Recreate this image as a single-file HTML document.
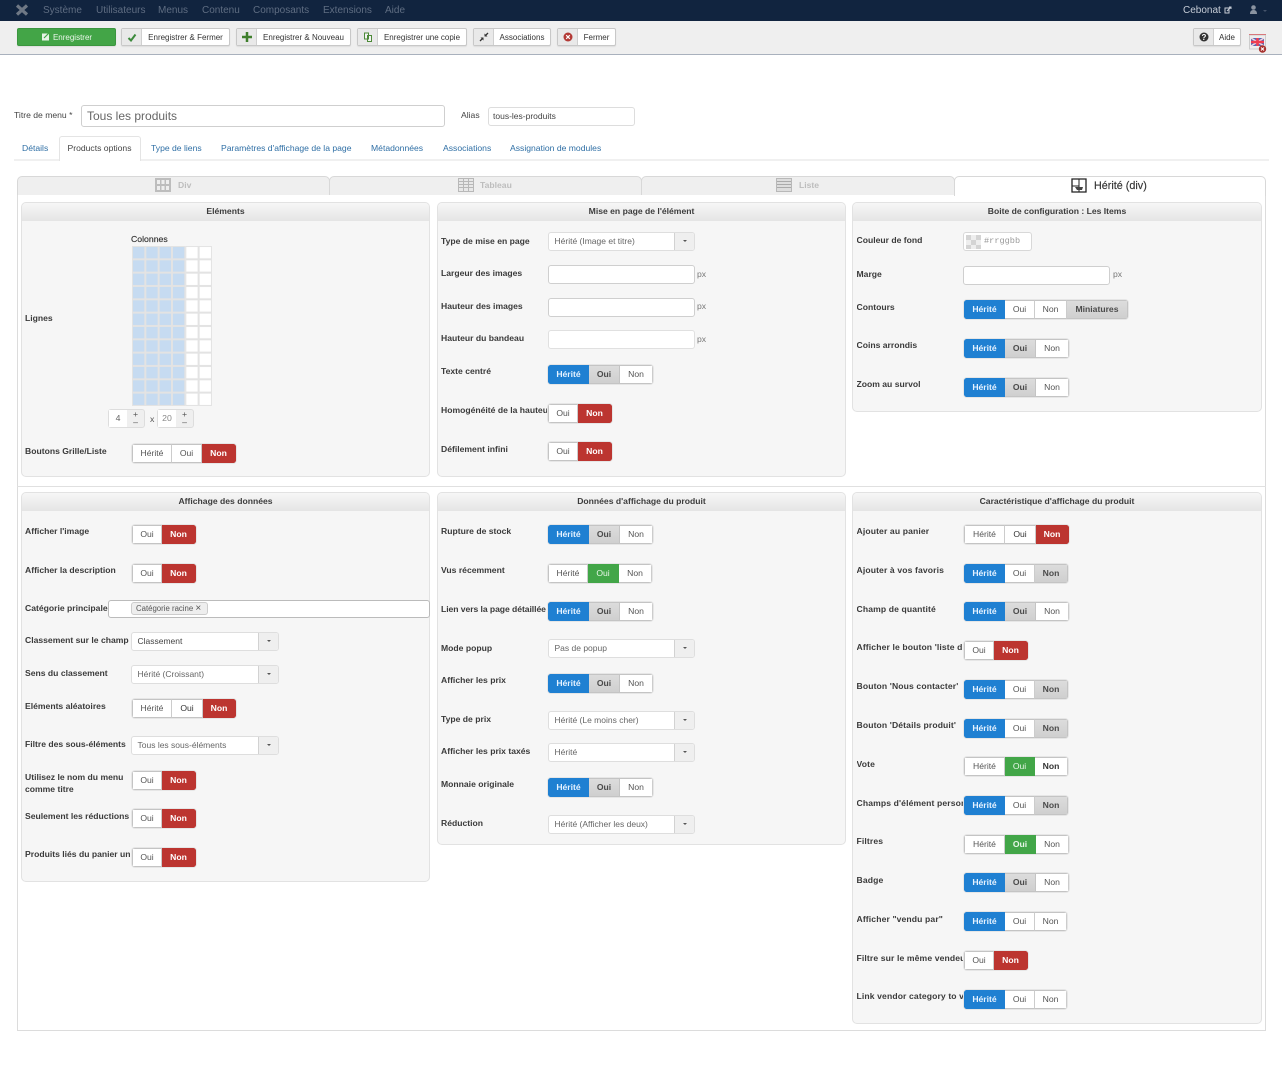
<!DOCTYPE html>
<html lang="fr"><head><meta charset="utf-8"><title>Tous les produits</title>
<style>
*{box-sizing:border-box}
html,body{margin:0;padding:0;background:#fff}
body{width:1282px;height:1080px;position:relative;overflow:hidden;font:8.7px/1 "Liberation Sans",sans-serif;color:#333;filter:blur(.3px)}
.a,.l,.g,.s,.i,.p,.n,.tb,.t,.tab,.px{position:absolute}
.n{top:5px;color:#5f6d82;font-size:10px;line-height:12px;white-space:nowrap}
.tb{top:28px;height:18px;background:#fff;border:1px solid #c8c8c8;border-radius:2px;box-shadow:0 1px 1px rgba(0,0,0,.08);display:flex;font-size:8px;line-height:18px;color:#333;white-space:nowrap}
.tb b{font-weight:normal;width:20px;background:#e9e9e9;border-right:1px solid #d0d0d0;display:flex;align-items:center;justify-content:center;flex:none}
.tb span{flex:1;text-align:center}
.t{top:143px;color:#2f6fa5;font-size:8.6px;line-height:10px;white-space:nowrap}
.tab{top:176px;height:19px;background:#efefef;border:1px solid #d8d8d8;border-bottom:0;border-radius:5px 5px 0 0}
.tl{position:absolute;top:180px;font-weight:bold;color:#bdbdbd;font-size:8.6px;line-height:10px}
.p{background:#f6f6f6;border:1px solid #e2e2e2;border-radius:5px}
.p>div{height:18px;background:linear-gradient(#f6f6f6,#e4e4e4);border-radius:4px 4px 0 0;text-align:center;font-weight:bold;font-size:8.6px;line-height:17px;color:#3c3c3c}
.l{font-weight:bold;font-size:8.6px;line-height:12px;color:#3a3a3a;white-space:nowrap;overflow:hidden;width:107px;margin-top:-1px}
.k{margin-top:0}
.z{letter-spacing:.12px;left:856.5px}
.g{display:flex;height:19px;border-radius:3px;background:#c4c4c4;box-shadow:0 0 0 1px #e6e6e6;font-size:8.6px;line-height:19px;text-align:center;color:#555;overflow:hidden}
.g i{font-style:normal;display:block;background:#fff;border:1px solid #c4c4c4;border-left:0;border-right:1px solid #ccc;line-height:17px}
.g i:first-child{border-left:1px solid #c4c4c4}
.g .w1{width:41px}.g .w2{width:31px}.g .w3{width:33px}.g .w4{width:30px}.g .w5{width:34px}
.g i.b{background:#1f80d2;border-color:#1f80d2;color:#e6f2ff;font-weight:bold}
.g i.o{background:linear-gradient(#dcdcdc,#cfcfcf);border-color:#c4c4c4;color:#4a4a4a;font-weight:bold}
.g i.r{background:#bc3530;border-color:#bc3530;color:#fff;font-weight:bold}
.g i.v{background:#42a648;border-color:#42a648;color:#e8f6e8}
.s{height:19px;background:#fff;border:1px solid #dedede;border-radius:3px;font-size:8.5px;line-height:17px;color:#666;padding-left:5.500px;white-space:nowrap}
.s::after{content:"";position:absolute;right:0;top:0;bottom:0;width:19px;background:#efefef;border-left:1px solid #d2d2d2;border-radius:0 2px 2px 0}
.s::before{content:"";position:absolute;z-index:1;right:7px;top:7px;border:2.500px solid transparent;border-top-color:#555;border-bottom:0}
.i{height:19px;background:#fff;border:1px solid #cfcfcf;border-radius:3px}
.px{font-size:8.6px;line-height:10px;color:#777}
</style></head><body>

<div class="a" style="left:0;top:0;width:1282px;height:21px;background:#11243f"></div>
<svg class="a" style="left:16px;top:4px" width="12" height="12" viewBox="0 0 12 12"><path d="M1 1.500 6 6l5-4.500M1 10.500 6 6l5 4.500" stroke="#6f7885" stroke-width="3.200" fill="none"/></svg>
<span class="n" style="left:43px">Système</span><span class="n" style="left:96px">Utilisateurs</span><span class="n" style="left:158px">Menus</span><span class="n" style="left:202px">Contenu</span><span class="n" style="left:253px">Composants</span><span class="n" style="left:323px">Extensions</span><span class="n" style="left:385px">Aide</span>
<span class="n" style="left:1183px;color:#c6ccd6">Cebonat</span>
<svg class="a" style="left:1224px;top:6px" width="8" height="8" viewBox="0 0 8 8"><path d="M1 2h4v5H1zM3 5l4-4M5 1h2v2" stroke="#c6ccd6" fill="none"/></svg>
<svg class="a" style="left:1249px;top:5px" width="9" height="10" viewBox="0 0 9 10"><circle cx="4.500" cy="2.500" r="2.300" fill="#8a93a0"/><path d="M1 9c0-3 1.500-4 3.500-4S8 6 8 9z" fill="#8a93a0"/></svg>
<div class="a" style="left:1263px;top:10px;border:2.500px solid transparent;border-top-color:#44526a"></div>

<div class="a" style="left:0;top:21px;width:1282px;height:34px;background:#efefef;border-bottom:1.500px solid #a9b1bd"></div>
<div class="tb" style="left:17px;width:99px;background:#43a547;border-color:#3b963f;color:#eaf6ea;justify-content:center;gap:3px"><svg width="9" height="16" viewBox="0 0 9 16"><path d="M1 4.500h7v7H1z" fill="#e8f4e8"/><path d="M3 9l1.500-1.500L8 4" stroke="#43a547" stroke-width="1.200" fill="none"/></svg>Enregistrer</div>
<div class="tb" style="left:121px;width:109px"><b><svg width="10" height="9" viewBox="0 0 10 9"><path d="M1.500 5 4 7.500 8.500 1.500" stroke="#3c8a3c" stroke-width="2" fill="none"/></svg></b><span>Enregistrer &amp; Fermer</span></div>
<div class="tb" style="left:236px;width:115px"><b><svg width="10" height="10" viewBox="0 0 10 10"><path d="M5 0v10M0 5h10" stroke="#3f7f2c" stroke-width="2.500"/></svg></b><span>Enregistrer &amp; Nouveau</span></div>
<div class="tb" style="left:357px;width:110px"><b><svg width="10" height="10" viewBox="0 0 10 10"><path d="M1.500 1h4v6h-4zM4.500 3.500h4v6h-4z" stroke="#4d8a38" fill="#f4f4f4"/></svg></b><span>Enregistrer une copie</span></div>
<div class="tb" style="left:473px;width:78px"><b><svg width="10" height="10" viewBox="0 0 10 10"><path d="M6 4l3-3M1 9l3-3" stroke="#333" stroke-width="1.300"/><path d="M5.500 1.500v3h3zM1.500 5.500h3v3z" fill="#333"/></svg></b><span>Associations</span></div>
<div class="tb" style="left:557px;width:59px"><b><svg width="10" height="10" viewBox="0 0 10 10"><circle cx="5" cy="5" r="4.500" fill="#b33a36"/><path d="M3.200 3.200l3.600 3.600M6.800 3.200 3.200 6.800" stroke="#fff" stroke-width="1.200"/></svg></b><span>Fermer</span></div>
<div class="tb" style="left:1193px;width:48px"><b><svg width="10" height="10" viewBox="0 0 10 10"><circle cx="5" cy="5" r="4.500" fill="#333"/><text x="5" y="8" font-size="8" font-weight="bold" text-anchor="middle" fill="#fff" font-family="Liberation Sans">?</text></svg></b><span>Aide</span></div>
<svg class="a" style="left:1249px;top:34px" width="18" height="20" viewBox="0 0 18 20"><path d="M0 .5h17" stroke="#e4252b"/><path d="M.5 1h16v14H.5z" fill="#eee" stroke="#ccc"/><path d="M2 4h13v8H2z" fill="#5468b8"/><path d="M2 4l13 8M15 4 2 12" stroke="#f4d8e0" stroke-width="1.500"/><path d="M2 8h13M8.500 4v8" stroke="#f03c50" stroke-width="2.500"/><circle cx="13.500" cy="15" r="3.700" fill="#a8322e"/><path d="M12 13.500l3 3M15 13.500l-3 3" stroke="#fff"/></svg>

<span class="a" style="left:14px;top:110px;font-size:8.6px;line-height:10px;color:#444">Titre de menu *</span>
<div class="i" style="left:81px;top:105px;width:364px;height:22px;font-size:12px;line-height:20px;padding-left:5px;color:#666">Tous les produits</div>
<span class="a" style="left:461px;top:110px;font-size:8.6px;line-height:10px;color:#444">Alias</span>
<div class="i" style="left:488px;top:107px;width:147px;height:19px;font-size:8.5px;line-height:17px;padding-left:4px;color:#444;border-color:#ddd">tous-les-produits</div>

<div class="a" style="left:14px;top:159px;width:1255px;height:2px;background:#f0f0f0"></div>
<div class="a" style="left:59px;top:136px;width:82px;height:25px;background:#fff;border:1px solid #e4e4e4;border-bottom:0;border-radius:3px 3px 0 0"></div>
<span class="t" style="left:22px">Détails</span><span class="t" style="left:67.500px;color:#444">Products options</span><span class="t" style="left:151px">Type de liens</span><span class="t" style="left:221px">Paramètres d'affichage de la page</span><span class="t" style="left:371px">Métadonnées</span><span class="t" style="left:443px">Associations</span><span class="t" style="left:510px">Assignation de modules</span>

<div class="a" style="left:17px;top:194px;width:1249px;height:837px;border:1px solid #dcdcdc;border-top:0"></div>
<div class="a" style="left:17px;top:486px;width:1249px;height:1px;background:#e0e0e0"></div>
<div class="tab" style="left:17px;width:313px"></div><div class="tab" style="left:329px;width:313px"></div><div class="tab" style="left:641px;width:314px"></div>
<div class="tab" style="left:954px;width:312px;background:#fff;height:20px"></div>
<svg class="a" style="left:155px;top:178px" width="16" height="14" viewBox="0 0 16 14"><path d="M0 0h16v14H0z" fill="#bdbdbd"/><path d="M2 2h3v4H2zM6.500 2h3v4h-3zM11 2h3v4h-3zM2 8h3v4H2zM6.500 8h3v4h-3zM11 8h3v4h-3z" fill="#eee"/></svg>
<span class="tl" style="left:178px">Div</span>
<svg class="a" style="left:458px;top:178px" width="16" height="14" viewBox="0 0 16 14"><path d="M.5.500h15v13H.5zM.5 3.500h15M.5 6.500h15M.5 9.500h15M5.500.500v13M10.500.500v13" stroke="#b8b8b8" fill="#e8e8e8"/></svg>
<span class="tl" style="left:480px">Tableau</span>
<svg class="a" style="left:776px;top:178px" width="16" height="14" viewBox="0 0 16 14"><path d="M.5.500h15v13H.5z" stroke="#b8b8b8" fill="#ddd"/><path d="M1 3.500h14M1 6.500h14M1 9.500h14" stroke="#aaa"/></svg>
<span class="tl" style="left:799px">Liste</span>
<svg class="a" style="left:1071px;top:178px" width="16" height="15" viewBox="0 0 16 15"><path d="M1 1h14v13H1z" stroke="#222" stroke-width="1.300" fill="#fff"/><path d="M1 8h7v6M8 1v7" stroke="#222" fill="none"/><path d="M4 9h8l-1 3H6z" fill="#444"/></svg>
<span class="a" style="left:1094px;top:180px;font-size:10.800px;line-height:12px;color:#333;-webkit-text-stroke:.15px #333">Hérité (div)</span>

<!-- panels -->
<div class="p" style="left:21px;top:202px;width:409px;height:275px"><div>Eléments</div></div>
<div class="p" style="left:437px;top:202px;width:409px;height:275px"><div>Mise en page de l'élément</div></div>
<div class="p" style="left:852px;top:202px;width:410px;height:210px"><div>Boite de configuration : Les Items</div></div>
<div class="p" style="left:21px;top:492px;width:409px;height:390px"><div>Affichage des données</div></div>
<div class="p" style="left:437px;top:492px;width:409px;height:353px"><div>Données d'affichage du produit</div></div>
<div class="p" style="left:852px;top:492px;width:410px;height:532px"><div>Caractéristique d'affichage du produit</div></div>

<!-- Eléments -->
<span class="a" style="left:131px;top:234px;font-size:8.7px;line-height:10px;color:#333;-webkit-text-stroke:.15px #333">Colonnes</span>
<svg class="a" style="left:132px;top:246px" width="80" height="160" viewBox="0 0 80 160"><defs><pattern id="c" width="13.330" height="13.330" patternUnits="userSpaceOnUse"><rect x=".5" y=".5" width="12.300" height="12.300" fill="#c6dbf1" stroke="#e3e3e3"/></pattern><pattern id="e" width="13.330" height="13.330" patternUnits="userSpaceOnUse"><rect x=".5" y=".5" width="12.300" height="12.300" fill="#fff" stroke="#e3e3e3"/></pattern></defs><rect width="53.320" height="160" fill="url(#c)"/><g transform="translate(53.320 0)"><rect width="26.660" height="160" fill="url(#e)"/></g></svg>
<span class="l k" style="left:25px;top:312px">Lignes</span>
<div class="a" style="left:108px;top:409px;width:37px;height:19px;background:#efefef;border:1px solid #ddd;border-radius:3px"><div class="a" style="left:0;top:0;width:18px;height:17px;background:#fff;text-align:center;line-height:17px;color:#666">4</div><div class="a" style="left:18px;top:0;width:17px;text-align:center;line-height:8px;color:#555">+<br>–</div></div>
<span class="a" style="left:150px;top:414px;line-height:10px;color:#555">x</span>
<div class="a" style="left:157px;top:409px;width:37px;height:19px;background:#efefef;border:1px solid #ddd;border-radius:3px"><div class="a" style="left:0;top:0;width:18px;height:17px;background:#fff;text-align:center;line-height:17px;color:#888">20</div><div class="a" style="left:18px;top:0;width:17px;text-align:center;line-height:8px;color:#555">+<br>–</div></div>
<span class="l k" style="left:25px;top:445px">Boutons Grille/Liste</span>
<div class="g" style="left:132px;top:444px"><i style="width:40px">Hérité</i><i class="w4">Oui</i><i class="r w5">Non</i></div>

<!-- Mise en page -->
<span class="l k" style="left:441px;top:235px">Type de mise en page</span><div class="s" style="left:548px;top:232px;width:147px">Hérité (Image et titre)</div>
<span class="l" style="left:441px;top:268px">Largeur des images</span><div class="i" style="left:548px;top:265px;width:147px"></div><span class="px" style="left:697px;top:269px">px</span>
<span class="l k" style="left:441px;top:300px">Hauteur des images</span><div class="i" style="left:548px;top:298px;width:147px"></div><span class="px" style="left:697px;top:301px">px</span>
<span class="l" style="left:441px;top:333px">Hauteur du bandeau</span><div class="i" style="left:548px;top:330px;width:147px;border-color:#e0e0e0"></div><span class="px" style="left:697px;top:334px">px</span>
<span class="l" style="left:441px;top:366px">Texte centré</span>
<div class="g" style="left:548px;top:365px"><i class="b w1">Hérité</i><i class="o w2">Oui</i><i class="w3">Non</i></div>
<span class="l" style="left:441px;top:405px">Homogénéité de la hauteur</span>
<div class="g" style="left:548px;top:404px"><i class="w4">Oui</i><i class="r w5">Non</i></div>
<span class="l k" style="left:441px;top:443px">Défilement infini</span>
<div class="g" style="left:548px;top:442px"><i class="w4">Oui</i><i class="r w5">Non</i></div>

<!-- Boite -->
<span class="l" style="left:856.500px;top:235px">Couleur de fond</span>
<div class="i" style="left:963px;top:232px;width:69px;color:#999;font:8.6px/17px 'Liberation Mono',monospace;padding-left:20px;border-color:#d8d8d8">#rrggbb</div>
<svg class="a" style="left:966px;top:235px" width="15" height="14" viewBox="0 0 15 14"><rect width="15" height="14" fill="#eee"/><path d="M0 0h5v5H0zM10 0h5v5h-5zM5 5h5v5H5zM0 10h5v4H0zM10 10h5v4h-5z" fill="#d4d4d4"/></svg>
<span class="l k" style="left:856.500px;top:268px">Marge</span><div class="i" style="left:963px;top:266px;width:147px"></div><span class="px" style="left:1113px;top:269px">px</span>
<span class="l k" style="left:856.500px;top:301px">Contours</span>
<div class="g" style="left:964px;top:300px"><i class="b w1">Hérité</i><i class="w4">Oui</i><i class="w3" style="width:32px">Non</i><i class="o" style="width:61px">Miniatures</i></div>
<span class="l" style="left:856.500px;top:340px">Coins arrondis</span>
<div class="g" style="left:964px;top:339px"><i class="b w1">Hérité</i><i class="o w2">Oui</i><i class="w3">Non</i></div>
<span class="l" style="left:856.500px;top:379px">Zoom au survol</span>
<div class="g" style="left:964px;top:378px"><i class="b w1">Hérité</i><i class="o w2">Oui</i><i class="w3">Non</i></div>

<!-- Affichage des données -->
<span class="l" style="left:25px;top:526px">Afficher l'image</span><div class="g" style="left:132px;top:525px"><i class="w4">Oui</i><i class="r w5">Non</i></div>
<span class="l k" style="left:25px;top:564px">Afficher la description</span><div class="g" style="left:132px;top:564px"><i class="w4">Oui</i><i class="r w5">Non</i></div>
<span class="l" style="left:25px;top:603px;width:84px">Catégorie principale</span>
<div class="i" style="left:108px;top:600px;width:322px;height:18px;border-color:#bbb"></div>
<div class="a" style="left:131px;top:602px;width:77px;height:13px;background:#eee;border:1px solid #ccc;border-radius:3px;font-size:7.800px;line-height:11px;padding-left:4px;color:#555;white-space:nowrap">Catégorie racine <span style="font-size:10px;line-height:8px">×</span></div>
<span class="l" style="left:25px;top:635px">Classement sur le champ</span><div class="s" style="left:131px;top:632px;width:148px;color:#444">Classement</div>
<span class="l" style="left:25px;top:668px">Sens du classement</span><div class="s" style="left:131px;top:665px;width:148px">Hérité (Croissant)</div>
<span class="l k" style="left:25px;top:700px">Eléments aléatoires</span><div class="g" style="left:132px;top:699px"><i style="width:40px">Hérité</i><i class="w2" style="color:#333">Oui</i><i class="r w3">Non</i></div>
<span class="l" style="left:25px;top:739px">Filtre des sous-éléments</span><div class="s" style="left:131px;top:736px;width:148px">Tous les sous-éléments</div>
<span class="l k" style="left:25px;top:771px;white-space:normal">Utilisez le nom du menu comme titre</span><div class="g" style="left:132px;top:771px"><i class="w4">Oui</i><i class="r w5">Non</i></div>
<span class="l k" style="left:25px;top:810px">Seulement les réductions</span><div class="g" style="left:132px;top:809px"><i class="w4">Oui</i><i class="r w5">Non</i></div>
<span class="l" style="left:25px;top:849px">Produits liés du panier uniquement</span><div class="g" style="left:132px;top:848px"><i class="w4">Oui</i><i class="r w5">Non</i></div>

<!-- Données -->
<span class="l" style="left:441px;top:526px">Rupture de stock</span><div class="g" style="left:548px;top:525px"><i class="b w1">Hérité</i><i class="o w2">Oui</i><i class="w3">Non</i></div>
<span class="l k" style="left:441px;top:564px">Vus récemment</span><div class="g" style="left:548px;top:564px"><i style="width:40px">Hérité</i><i class="v w2">Oui</i><i class="w3">Non</i></div>
<span class="l" style="left:441px;top:604px;letter-spacing:-.06px">Lien vers la page détaillée</span><div class="g" style="left:548px;top:602px"><i class="b w1">Hérité</i><i class="o w2">Oui</i><i class="w3">Non</i></div>
<span class="l k" style="left:441px;top:642px">Mode popup</span><div class="s" style="left:548px;top:639px;width:147px">Pas de popup</div>
<span class="l" style="left:441px;top:675px">Afficher les prix</span><div class="g" style="left:548px;top:674px"><i class="b w1">Hérité</i><i class="o w2">Oui</i><i class="w3">Non</i></div>
<span class="l k" style="left:441px;top:713px">Type de prix</span><div class="s" style="left:548px;top:711px;width:147px">Hérité (Le moins cher)</div>
<span class="l" style="left:441px;top:746px">Afficher les prix taxés</span><div class="s" style="left:548px;top:743px;width:147px">Hérité</div>
<span class="l" style="left:441px;top:779px">Monnaie originale</span><div class="g" style="left:548px;top:778px"><i class="b w1">Hérité</i><i class="o w2">Oui</i><i class="w3">Non</i></div>
<span class="l k" style="left:441px;top:817px">Réduction</span><div class="s" style="left:548px;top:815px;width:147px">Hérité (Afficher les deux)</div>

<!-- Caractéristique -->
<span class="l z" style="top:526px">Ajouter au panier</span><div class="g" style="left:964px;top:525px"><i class="w1">Hérité</i><i class="w2" style="color:#333">Oui</i><i class="r w3">Non</i></div>
<span class="l z" style="top:565px">Ajouter à vos favoris</span><div class="g" style="left:964px;top:564px"><i class="b w1">Hérité</i><i class="w4">Oui</i><i class="o w3">Non</i></div>
<span class="l z" style="top:604px">Champ de quantité</span><div class="g" style="left:964px;top:602px"><i class="b w1">Hérité</i><i class="o w2">Oui</i><i class="w3">Non</i></div>
<span class="l z" style="top:642px">Afficher le bouton 'liste d'envies'</span><div class="g" style="left:964px;top:641px"><i class="w4">Oui</i><i class="r w5">Non</i></div>
<span class="l z" style="top:681px">Bouton 'Nous contacter'</span><div class="g" style="left:964px;top:680px"><i class="b w1">Hérité</i><i class="w4">Oui</i><i class="o w3">Non</i></div>
<span class="l z" style="top:720px">Bouton 'Détails produit'</span><div class="g" style="left:964px;top:719px"><i class="b w1">Hérité</i><i class="w4">Oui</i><i class="o w3">Non</i></div>
<span class="l z" style="top:759px">Vote</span><div class="g" style="left:964px;top:757px"><i class="w1">Hérité</i><i class="v w4">Oui</i><i class="w3" style="color:#333;font-weight:bold">Non</i></div>
<span class="l z" style="top:798px">Champs d'élément personnalisés</span><div class="g" style="left:964px;top:796px"><i class="b w1">Hérité</i><i class="w4">Oui</i><i class="o w3">Non</i></div>
<span class="l z" style="top:836px">Filtres</span><div class="g" style="left:964px;top:835px"><i class="w1">Hérité</i><i class="v w2" style="font-weight:bold">Oui</i><i class="w3">Non</i></div>
<span class="l z" style="top:875px">Badge</span><div class="g" style="left:964px;top:873px"><i class="b w1">Hérité</i><i class="o w2">Oui</i><i class="w3">Non</i></div>
<span class="l z" style="top:914px">Afficher "vendu par"</span><div class="g" style="left:964px;top:912px"><i class="b w1">Hérité</i><i class="w4">Oui</i><i class="w3" style="width:32px">Non</i></div>
<span class="l z" style="top:953px">Filtre sur le même vendeur</span><div class="g" style="left:964px;top:951px"><i class="w4">Oui</i><i class="r w5">Non</i></div>
<span class="l z" style="top:991px">Link vendor category to vendor</span><div class="g" style="left:964px;top:990px"><i class="b w1">Hérité</i><i class="w4">Oui</i><i class="w3" style="width:32px">Non</i></div>

</body></html>
